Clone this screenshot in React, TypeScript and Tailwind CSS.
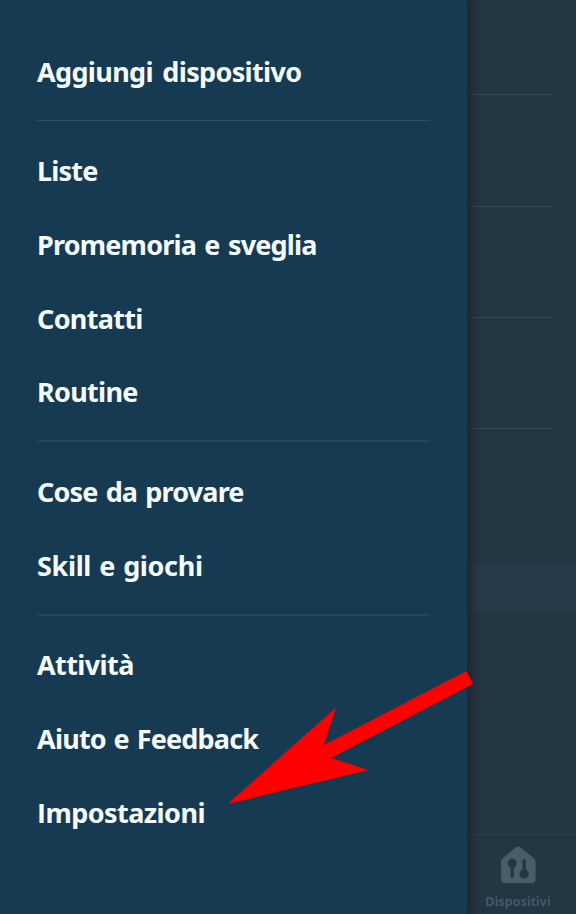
type Item = { label: string; style: string };

const groups: { divider: string; items: Item[] }[] = [
  { divider: "", items: [{ label: "Aggiungi dispositivo", style: "tracking-[-0.65px] [word-spacing:3px]" }] },
  {
    divider: "mt-[11.5px] border-t border-[#2b4f67] pt-[13.200px]",
    items: [
      { label: "Liste", style: "tracking-[-0.8px]" },
      { label: "Promemoria e sveglia", style: "tracking-[-0.8px] [word-spacing:2px]" },
      { label: "Contatti", style: "tracking-[-0.7px]" },
      { label: "Routine", style: "tracking-[-0.7px]" },
    ],
  },
  {
    divider: "mt-[11.6px] border-t-2 border-[#23465f] pt-[12.400px]",
    items: [
      { label: "Cose da provare", style: "tracking-[-0.85px] [word-spacing:2px]" },
      { label: "Skill e giochi", style: "tracking-[-0.35px] [word-spacing:1.5px]" },
    ],
  },
  {
    divider: "mt-[11.6px] border-t-2 border-[#23465f] pt-[12.400px]",
    items: [
      { label: "Attività", style: "tracking-[-0.6px]" },
      { label: "Aiuto e Feedback", style: "tracking-[-0.8px] [word-spacing:1.5px]" },
      { label: "Impostazioni", style: "tracking-[-0.55px] first-letter:font-['Open_Sans']" },
    ],
  },
];

function Drawer() {
  return (
    <nav className="relative z-10 h-full w-[467px] shrink-0 bg-[#173a53] pt-[34.5px] pr-[37px] pl-[37px] shadow-[2px_0_10px_2px_rgba(27,32,36,0.9)]">
      {groups.map((group, i) => (
        <ul key={i} className={group.divider}>
          {group.items.map((item) => (
            <li key={item.label} className="flex h-[73.7px] items-center">
              <a className={`text-[27px] leading-none font-bold whitespace-nowrap text-[#f5fcff] ${item.style}`}>
                {item.label}
              </a>
            </li>
          ))}
        </ul>
      ))}
    </nav>
  );
}

function Backdrop() {
  return (
    <main className="flex h-full flex-1 flex-col bg-[#253643]">
      <div className="mr-6 h-[95px] border-b border-[#304c57]" />
      <div className="mr-6 h-[112px] border-b border-[#304c57]" />
      <div className="mr-6 h-[111px] border-b border-[#304c57]" />
      <div className="mr-6 h-[111px] border-b border-[#304c57]" />
      <div className="mt-[135px] h-[49px] bg-[#283a48]" />
      <footer className="mt-auto flex h-[80px] flex-col items-center border-t border-[#2d414e] pt-[11px] pr-[7px]">
        <svg width="36" height="38" viewBox="0 0 36 38" className="shrink-0 text-[#4c5b68]">
          <path
            d="M15.500 1.600Q18 -.2 20.500 1.600L33.500 12Q35.500 13.700 35.500 16V33Q35.500 37 31.500 37H5Q1 37 1 33V16Q1 13.700 3 12Z"
            fill="currentColor"
          />
          <g fill="#253643" stroke="#253643" strokeWidth="3.200" strokeLinecap="round">
            <path d="M12.200 17V30.500M24.200 14.500V28" />
            <circle cx="12.200" cy="17.300" r="3" />
            <circle cx="24.200" cy="28" r="3" />
          </g>
        </svg>
        <span className="mt-[9px] text-[12.5px] leading-[17px] font-semibold tracking-[0.2px] text-[#4c5b68]">
          Dispositivi
        </span>
      </footer>
    </main>
  );
}

export default function App() {
  return (
    <div className="relative flex h-[914px] w-[576px] overflow-hidden bg-[#253643] font-['Noto_Sans',sans-serif]">
      <Drawer />
      <Backdrop />
      <svg
        width="246"
        height="134"
        viewBox="0 0 246 134"
        className="absolute top-[671px] left-[227px] z-20"
        aria-hidden="true"
      >
        <path d="M0.500 133L109 36.500L97 74L239.500 0L246 13L104 87L141.500 99Z" fill="#ff0000" />
      </svg>
    </div>
  );
}
